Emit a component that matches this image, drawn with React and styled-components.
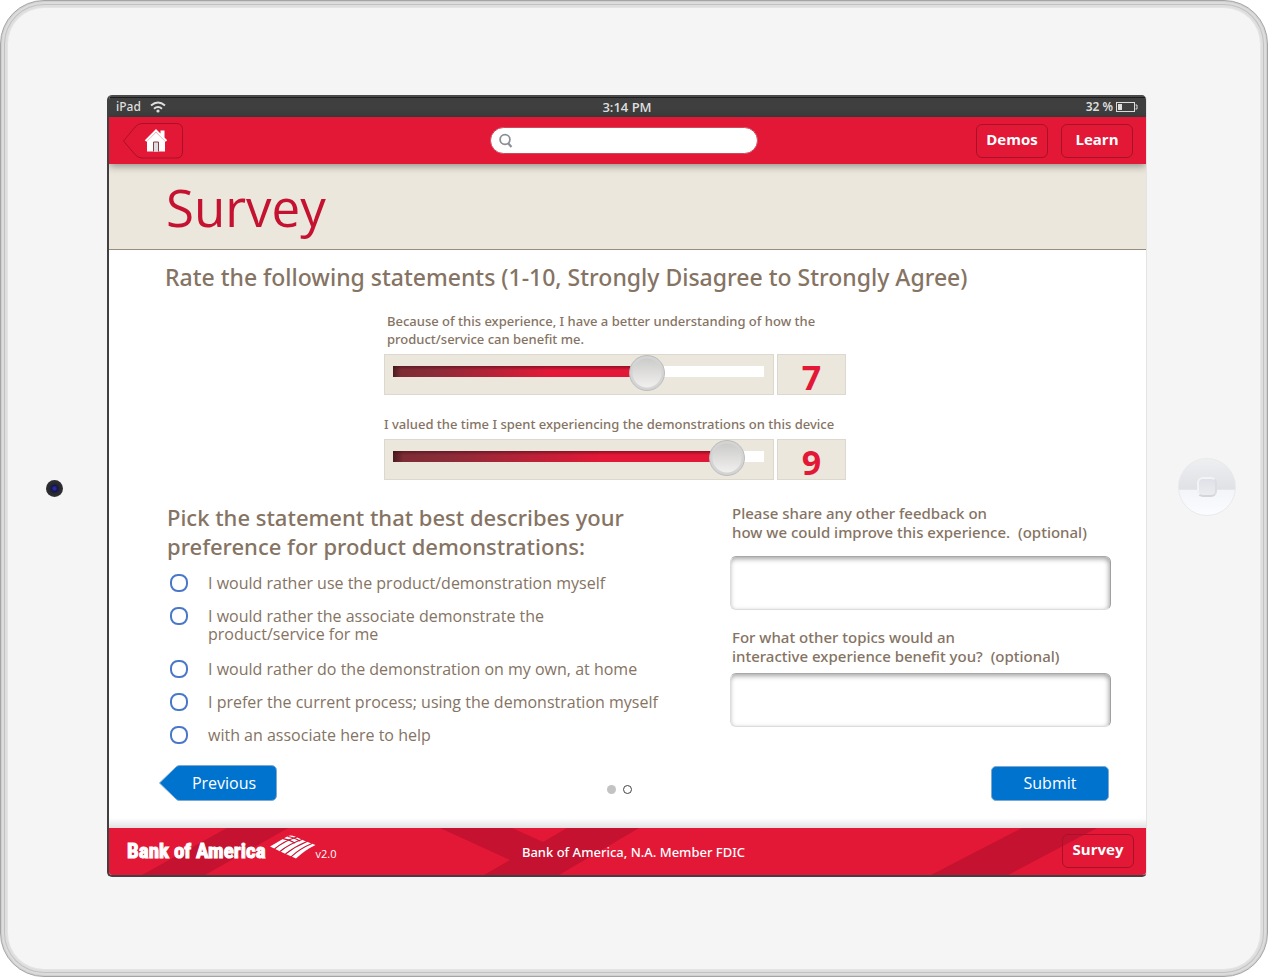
import React, { useState } from "react";
import styled, { createGlobalStyle } from "styled-components";

const red = "#e31836";
const darkRed = "#c41230";
const brown = "#857363";
const sand = "#ebe7dc";
const blue = "#0073cf";
const mediumFont = '"Noto Sans", "Open Sans", sans-serif';

const GlobalStyle = createGlobalStyle`
  * { box-sizing: border-box; }
  body {
    margin: 0;
    background: #fff;
    font-family: "Open Sans", "Noto Sans", sans-serif;
    color: ${brown};
  }
  h1, h2, p { margin: 0; }
  button, input, textarea { font-family: inherit; }
`;

const Device = styled.div`
  display: flex;
  align-items: stretch;
  min-height: 100vh;
  margin-right: 2px;
  padding: 94px 0 99px;
  border: 1px solid #a4a4a4;
  border-radius: 44px;
  background: #f5f5f5;
  box-shadow: inset 0 0 0 1px #d0d0d0, inset 0 0 0 3px #dcdcdc,
    inset 0 0 0 4px #c2c2c2, inset 0 0 0 6px #dedede, inset 0 0 0 7px #e4e4e4;
`;

const Bezel = styled.div`
  flex: none;
  display: flex;
  align-items: center;
  justify-content: center;
  width: ${(p) => p.$width};
  padding-top: ${(p) => p.$drop};
`;

const Camera = styled.div`
  width: 17px;
  height: 17px;
  border-radius: 50%;
  background: radial-gradient(circle, #2a2aa8 0 1px, #16164f 3px, #26282c 5px, #2d2f33 8px);
`;

const HomeKey = styled.div`
  display: flex;
  align-items: center;
  justify-content: center;
  width: 58px;
  height: 58px;
  border: 1px solid #e9eaec;
  border-radius: 50%;
  background: linear-gradient(#eeeff1, #dfe1e6 54%, #f4f5f8 56%, #fbfcff);
`;

const HomeKeyMark = styled.div`
  width: 20px;
  height: 20px;
  border: 2px solid #f2f3f5;
  border-right-color: #dcdde1;
  border-bottom-color: #d4d5da;
  border-radius: 6px;
  background: linear-gradient(#dfe1e6, #ebecf0);
`;

const Screen = styled.div`
  flex: 1;
  display: flex;
  flex-direction: column;
  overflow: hidden;
  border: 2px solid #423f40;
  border-top-width: 0;
  border-right: 1px solid #e4e4e4;
  border-radius: 5px;
  background: #fff;
`;

const StatusBar = styled.div`
  display: grid;
  grid-template-columns: 1fr auto 1fr;
  align-items: center;
  height: 22px;
  padding: 2px 8px 0 7px;
  background: linear-gradient(#4a4a4a 2px, #1d1d1d 2px, #1d1d1d 3px, #3f3f3f 3px);
  color: #dedede;
  font-size: 13px;
  font-weight: 600;
  line-height: 18px;
`;

const StatusGroup = styled.div`
  display: flex;
  align-items: center;
  justify-content: ${(p) => (p.$end ? "flex-end" : "flex-start")};
  gap: ${(p) => (p.$end ? "3px" : "8px")};
  font-family: ${mediumFont};
  font-size: 12px;
  font-weight: ${(p) => (p.$end ? 600 : 500)};
`;

const Header = styled.header`
  position: relative;
  z-index: 1;
  display: grid;
  grid-template-columns: 50fr 268px 51fr;
  align-items: center;
  height: 47px;
  padding: 0 13px 0 14px;
  background: ${red};
  box-shadow: 0 2px 8px rgba(0, 0, 0, 0.4);
`;

const ArrowButton = styled.button`
  position: relative;
  display: flex;
  align-items: center;
  justify-content: center;
  width: ${(p) => p.$width};
  height: 36px;
  padding: 0 0 0 ${(p) => p.$indent};
  border: 0;
  background: none;
  color: #fff;
  font-size: 16px;
  cursor: pointer;

  span { position: relative; }
`;

const ButtonShape = styled.svg`
  position: absolute;
  inset: 0;
`;

const HomeIcon = styled.svg`
  position: relative;
  margin-bottom: 2px;
`;

const SearchBox = styled.div`
  display: flex;
  align-items: center;
  gap: 6px;
  height: 27px;
  padding: 0 14px 0 8px;
  border: 1px solid #d0485c;
  border-radius: 14px;
  background: #fff;
`;

const SearchInput = styled.input`
  flex: 1;
  min-width: 0;
  border: 0;
  outline: 0;
  background: none;
  font-size: 14px;
`;

const HeaderActions = styled.nav`
  display: flex;
  justify-content: flex-end;
  gap: 13px;
`;

const RedButton = styled.button`
  width: 72px;
  height: 34px;
  padding: 0 0 4px;
  border: 1px solid #a81228;
  border-radius: 6px;
  background: ${red};
  color: #fff;
  font-size: 15px;
  font-weight: 700;
  cursor: pointer;
`;

const TitleBand = styled.div`
  height: 86px;
  padding: 3px 57px 0;
  border-bottom: 1px solid #988d7c;
  background: ${sand};
`;

const Title = styled.h1`
  color: ${darkRed};
  font-size: 51px;
  font-weight: 400;
  line-height: 80px;
`;

const Main = styled.main`
  flex: 1;
  display: flex;
  flex-direction: column;
  padding: 12px 35px 27px 50px;
  background: linear-gradient(to top, #e2e2e2, #fff 10px);
`;

const RateHeading = styled.h2`
  padding-left: 6px;
  font-family: ${mediumFont};
  font-size: 23px;
  font-weight: 500;
  line-height: 30px;
`;

const Ratings = styled.section`
  display: flex;
  flex-direction: column;
  gap: 21px;
  width: 462px;
  margin: 20px 0 0 225px;
`;

const RatingLabel = styled.label`
  display: block;
  padding: 0 0 6px ${(p) => p.$indent};
  font-family: ${mediumFont};
  font-size: 13px;
  font-weight: 500;
  line-height: 18px;
`;

const RatingRow = styled.div`
  display: grid;
  grid-template-columns: 1fr 69px;
  gap: 3px;
  height: 40px;
`;

const RatingPanel = styled.div`
  display: flex;
  align-items: flex-start;
  justify-content: center;
  padding: ${(p) => (p.$value ? "6px 0 0" : "0 9px 0 8px")};
  border: 1px solid #dcd8cd;
  background: ${sand};
`;

const Score = styled.output`
  color: ${red};
  font-size: 34px;
  font-weight: 700;
  line-height: 33px;
`;

const Slider = styled.input`
  appearance: none;
  width: 100%;
  height: 33px;
  margin: 0;
  background: none;
  cursor: pointer;

  &::-webkit-slider-runnable-track {
    height: 11px;
    background:
      linear-gradient(rgba(60, 10, 20, 0.5), transparent 4px) 0 0 / var(--fill) 100% no-repeat,
      linear-gradient(to right, #4a1c20, #7e2c35 3%, #8a2c38 15%, ${red} 60%) 0 0 / var(--fill) 100% no-repeat,
      #fff;
  }

  &::-webkit-slider-thumb {
    appearance: none;
    width: 36px;
    height: 36px;
    margin-top: -11px;
    border: 1px solid #bcbcbc;
    border-radius: 50%;
    background: radial-gradient(circle, transparent 14px, #d4d4d4 15px),
      linear-gradient(#c8c8c6, #f4f3f1);
  }
`;

const Questions = styled.div`
  display: grid;
  grid-template-columns: 1fr 381px;
  margin-top: 24px;
`;

const Choices = styled.fieldset`
  min-width: 0;
  margin: 0;
  padding: 0 0 0 8px;
  border: 0;
`;

const Legend = styled.legend`
  padding: 0;
  font-family: ${mediumFont};
  font-size: 22px;
  font-weight: 500;
  line-height: 29px;
`;

const ChoiceList = styled.div`
  display: flex;
  flex-direction: column;
  gap: 15px;
  padding: 13px 0 0 3px;
`;

const Choice = styled.label`
  display: flex;
  align-items: flex-start;
  gap: 20px;
  padding-bottom: ${(p) => (p.$wrapped ? "2px" : "0")};
  font-size: 16px;
  line-height: 18px;
`;

const Radio = styled.input`
  appearance: none;
  flex: none;
  width: 18px;
  height: 18px;
  margin: 0;
  border: 2px solid #4a78c9;
  border-radius: 8px;
  background: #fff;

  &:checked { box-shadow: inset 0 0 0 3px #fff, inset 0 0 0 9px #4a78c9; }
`;

const Feedback = styled.section`
  display: flex;
  flex-direction: column;
  padding-top: 1px;
`;

const FieldLabel = styled.label`
  padding-left: 2px;
  font-family: ${mediumFont};
  font-size: 15px;
  font-weight: 500;
  line-height: 19px;
`;

const TextBox = styled.textarea`
  display: block;
  height: 54px;
  margin: ${(p) => p.$margin};
  padding: 8px;
  border: 1px solid #dcdcdc;
  border-top-color: #a8a8a8;
  border-right-color: #a0a0a0;
  border-radius: 6px;
  outline: 0;
  resize: none;
  box-shadow: inset -1px 2px 5px rgba(0, 0, 0, 0.36);
  font-size: 14px;
`;

const Pager = styled.div`
  display: grid;
  grid-template-columns: 1fr auto 1fr;
  align-items: center;
  margin-top: auto;
`;

const Dots = styled.div`
  display: flex;
  gap: 7px;
  padding: 13px 31px 0 0;
`;

const Dot = styled.span`
  width: 9px;
  height: 9px;
  border: ${(p) => (p.$current ? "1px solid #444" : "0")};
  border-radius: 50%;
  background: ${(p) => (p.$current ? "#fff" : "#c3c3c3")};
`;

const SubmitButton = styled.button`
  justify-self: end;
  width: 118px;
  height: 35px;
  margin-right: 2px;
  border: 1px solid #7fa8cf;
  border-radius: 5px;
  background: ${blue};
  color: #fff;
  font-size: 16px;
  cursor: pointer;
`;

const Footer = styled.footer`
  position: relative;
  display: grid;
  grid-template-columns: 1fr auto 1fr;
  align-items: center;
  height: 47px;
  padding: 0 12px 2px 18px;
  background: ${red};
  color: #fff;
`;

const FooterPattern = styled.svg`
  position: absolute;
  inset: 0;
  width: 100%;
  height: 100%;
`;

const Brand = styled.div`
  position: relative;
  display: flex;
  align-items: center;
  gap: 4px;
`;

const BrandName = styled.span`
  font-family: "Roboto Condensed", "Liberation Sans", sans-serif;
  font-size: 21px;
  font-weight: 700;
  line-height: 24px;
  -webkit-text-stroke: 1px #fff;
`;

const BrandMark = styled.svg`
  margin-bottom: 7px;
`;

const Version = styled.span`
  margin-left: -4px;
  padding-top: 6px;
  font-size: 11px;
  line-height: 14px;
`;

const Legal = styled.p`
  position: relative;
  padding: 3px 0 0 6px;
  font-family: ${mediumFont};
  font-size: 13px;
  font-weight: 500;
`;

const FooterAction = styled.div`
  position: relative;
  display: flex;
  justify-content: flex-end;

  button { background: transparent; }
`;

const choices = [
  ["I would rather use the product/demonstration myself"],
  ["I would rather the associate demonstrate the", "product/service for me"],
  ["I would rather do the demonstration on my own, at home"],
  ["I prefer the current process; using the demonstration myself"],
  ["with an associate here to help"],
];

function Rating({ id, indent, lines, initial }) {
  const [value, setValue] = useState(initial);
  return (
    <div>
      <RatingLabel htmlFor={id} $indent={indent}>
        {lines.map((line, i) => (
          <React.Fragment key={line}>
            {i > 0 && <br />}
            {line}
          </React.Fragment>
        ))}
      </RatingLabel>
      <RatingRow>
        <RatingPanel>
          <Slider
            id={id}
            type="range"
            min="0"
            max="10"
            step="any"
            value={value}
            onChange={(e) => setValue(Number(e.target.value))}
            style={{ "--fill": `${value * 10}%` }}
          />
        </RatingPanel>
        <RatingPanel $value>
          <Score htmlFor={id}>{Math.round(value)}</Score>
        </RatingPanel>
      </RatingRow>
    </div>
  );
}

export default function App() {
  const [picked, setPicked] = useState(null);
  return (
    <>
      <GlobalStyle />
      <Device>
        <Bezel $width="106px" $drop="4px">
          <Camera />
        </Bezel>
        <Screen>
          <StatusBar>
            <StatusGroup>
              iPad
              <svg width="18" height="12" viewBox="0 0 18 12" fill="none" stroke="#dedede" strokeWidth="2">
                <path d="M2 4.5 Q9 -1.5 16 4.5" />
                <path d="M5 7.7 Q9 4.2 13 7.7" />
                <circle cx="9" cy="10" r="1.6" fill="#dedede" stroke="none" />
              </svg>
            </StatusGroup>
            <span>3:14 PM</span>
            <StatusGroup $end>
              32 %
              <svg width="22" height="11" viewBox="0 0 22 11" fill="none" stroke="#dedede">
                <rect x="0.5" y="0.5" width="18" height="9" />
                <path d="M19.5 3 H21 V7 H19.5" />
                <rect x="2" y="2" width="4" height="6" fill="#dedede" stroke="none" />
              </svg>
            </StatusGroup>
          </StatusBar>

          <Header>
            <ArrowButton type="button" aria-label="Home" $width="60px" $indent="6px">
              <ButtonShape width="60" height="36" viewBox="0 0 60 36">
                <path
                  d="M.5 18 L12 4 Q15 .5 19 .5 H53 Q59.500 .5 59.500 6.500 V29 Q59.500 35 53 35 H19 Q15 35 12 31.500 Z"
                  fill={red}
                  stroke="#a81228"
                />
              </ButtonShape>
              <HomeIcon width="24" height="24" viewBox="0 0 24 24">
                <path d="M3 12 V23.500 H21 V12 L12 4 Z" fill="#fff" />
                <path d="M12 1 L.8 12.200 L2.300 13.700 L12 4 L21.700 13.700 L23.200 12.200 L20.500 9.500 V2.500 H16.500 V5.500 Z" fill="#fff" />
                <path d="M3 13.200 L12 4.300 L21 13.200" fill="none" stroke="#c99aa2" strokeWidth=".6" />
                <path d="M9.500 23.500 V14 H14.500 V23.500" fill="#ddd" stroke="#8c3a46" strokeWidth="1" />
              </HomeIcon>
            </ArrowButton>
            <SearchBox>
              <svg width="14" height="15" viewBox="0 0 14 15" fill="none" stroke="#8a9096" strokeWidth="1.800">
                <circle cx="6" cy="6.500" r="4.900" />
                <path d="M9.200 10.300 L12.500 14" strokeWidth="2.200" />
              </svg>
              <SearchInput type="search" aria-label="Search" />
            </SearchBox>
            <HeaderActions>
              <RedButton type="button">Demos</RedButton>
              <RedButton type="button">Learn</RedButton>
            </HeaderActions>
          </Header>

          <TitleBand>
            <Title>Survey</Title>
          </TitleBand>

          <Main>
            <RateHeading>
              Rate the following statements (1-10, Strongly Disagree to Strongly Agree)
            </RateHeading>

            <Ratings>
              <Rating
                id="understanding"
                indent="3px"
                lines={["Because of this experience, I have a better understanding of how the", "product/service can benefit me."]}
                initial={7.05}
              />
              <Rating
                id="valued"
                indent="0"
                lines={["I valued the time I spent experiencing the demonstrations on this device"]}
                initial={9.42}
              />
            </Ratings>

            <Questions>
              <Choices>
                <Legend>
                  Pick the statement that best describes your
                  <br />
                  preference for product demonstrations:
                </Legend>
                <ChoiceList>
                  {choices.map((lines, i) => (
                    <Choice key={lines[0]} $wrapped={lines.length > 1}>
                      <Radio
                        type="radio"
                        name="preference"
                        checked={picked === i}
                        onChange={() => setPicked(i)}
                      />
                      <span>
                        {lines[0]}
                        {lines[1] && <br />}
                        {lines[1]}
                      </span>
                    </Choice>
                  ))}
                </ChoiceList>
              </Choices>
              <Feedback>
                <FieldLabel htmlFor="feedback">
                  Please share any other feedback on
                  <br />
                  how we could improve this experience.{"\u00a0 "}(optional)
                </FieldLabel>
                <TextBox id="feedback" $margin="14px 0 18px" />
                <FieldLabel htmlFor="topics">
                  For what other topics would an
                  <br />
                  interactive experience benefit you?{"\u00a0 "}(optional)
                </FieldLabel>
                <TextBox id="topics" $margin="7px 0 0" />
              </Feedback>
            </Questions>

            <Pager>
              <ArrowButton type="button" $width="118px" $indent="12px">
                <ButtonShape width="118" height="36" viewBox="0 0 118 36">
                  <path
                    d="M.5 18 L17 2 Q18.500 .5 20.500 .5 H112 Q117.500 .5 117.500 6 V30 Q117.500 35.500 112 35.500 H20.500 Q18.500 35.500 17 34 Z"
                    fill={blue}
                    stroke="#7fa8cf"
                  />
                </ButtonShape>
                <span>Previous</span>
              </ArrowButton>
              <Dots>
                <Dot />
                <Dot $current />
              </Dots>
              <SubmitButton type="submit">Submit</SubmitButton>
            </Pager>
          </Main>

          <Footer>
            <FooterPattern viewBox="0 0 1037 47" preserveAspectRatio="xMidYMid slice" fill={darkRed}>
              <path d="M33 47 L118 0 H179 L96 47 Z" />
              <path d="M331 0 H403 L434 14 L458 0 H530 L450 47 H375 L401 32 Z" />
              <path d="M822 47 L913 0 H988 L899 47 Z" />
            </FooterPattern>
            <Brand>
              <BrandName>Bank of America</BrandName>
              <BrandMark width="46" height="25" viewBox="0 0 46 25">
                <path d="M0 11.500 L18 1 Q21 0 25 1.500 Q34 6 45.500 10 Q35 15 26 23.500 Q13 18 0 11.500 Z" fill="#fff" />
                <g fill="none" stroke={darkRed} strokeWidth="1.100">
                  <path d="M4.500 14 Q14 6 27 2" />
                  <path d="M10 16.500 Q19 9 32 4.500" />
                  <path d="M15.500 19 Q25 11.500 37 6.500" />
                  <path d="M21 21.800 Q30 13.500 42 8.500" />
                  <path d="M13 3.600 Q19 4.500 25 8" />
                  <path d="M17.500 1.500 Q23 2 30 6" />
                </g>
              </BrandMark>
              <Version>v2.0</Version>
            </Brand>
            <Legal>Bank of America, N.A. Member FDIC</Legal>
            <FooterAction>
              <RedButton type="button">Survey</RedButton>
            </FooterAction>
          </Footer>
        </Screen>
        <Bezel $width="120px" $drop="2px">
          <HomeKey>
            <HomeKeyMark />
          </HomeKey>
        </Bezel>
      </Device>
    </>
  );
}
